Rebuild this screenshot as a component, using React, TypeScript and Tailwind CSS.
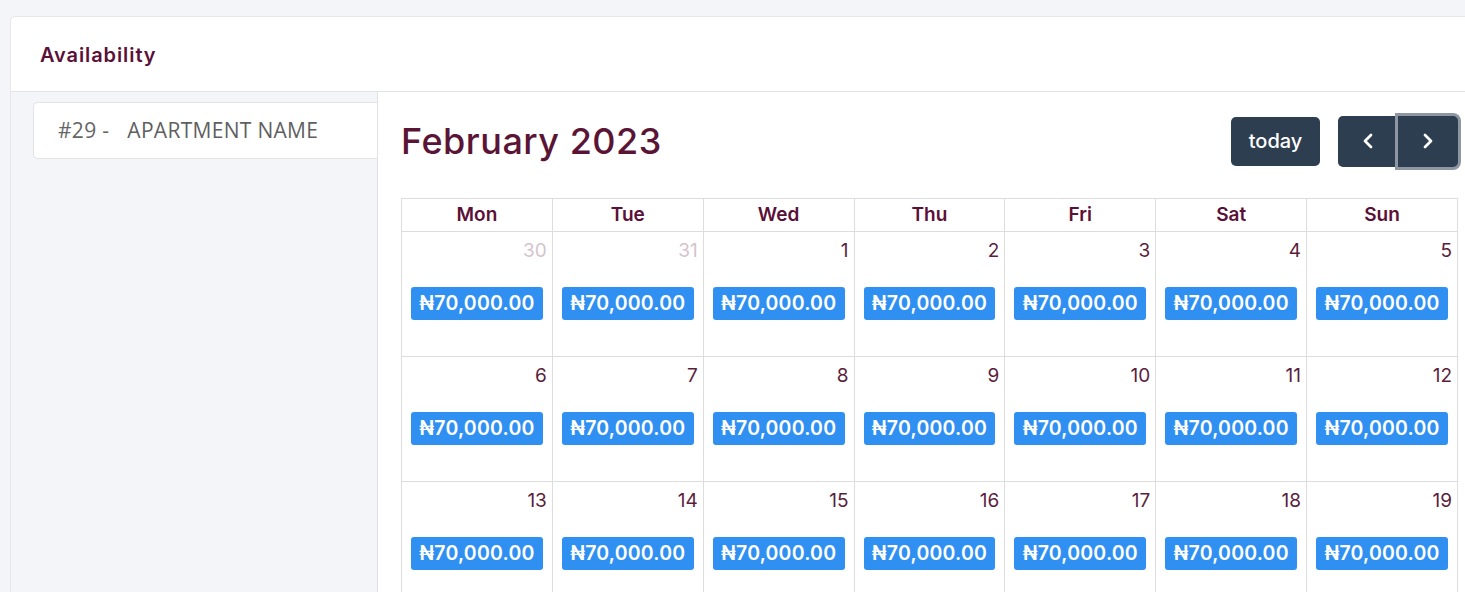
import { ChevronLeft, ChevronRight } from 'lucide-react';

const font = { fontFamily: 'Inter, "Noto Sans", "DejaVu Sans", sans-serif' };

type Day = { n: number; other?: boolean };

const weeks: Day[][] = [
  [{ n: 30, other: true }, { n: 31, other: true }, { n: 1 }, { n: 2 }, { n: 3 }, { n: 4 }, { n: 5 }],
  [{ n: 6 }, { n: 7 }, { n: 8 }, { n: 9 }, { n: 10 }, { n: 11 }, { n: 12 }],
  [{ n: 13 }, { n: 14 }, { n: 15 }, { n: 16 }, { n: 17 }, { n: 18 }, { n: 19 }],
];

const dayNames = ['Mon', 'Tue', 'Wed', 'Thu', 'Fri', 'Sat', 'Sun'];

function DayCell({ day }: { day: Day }) {
  return (
    <td className="border border-[#dddddd] align-top h-[125px] p-0">
      <div className="flex flex-col h-full">
        <div
          className={`text-right pr-[5px] pt-[6px] text-[19px] leading-[26px] ${
            day.other ? 'text-[#d5c4cc]' : 'text-[#5a1e3c]'
          }`}
        >
          {day.n}
        </div>
        <div className="mx-[9px] mt-[23px] h-[33px] rounded-[3px] bg-[#3090f2] text-white font-semibold text-[19.5px] tracking-[0.2px] flex items-center justify-center">
          ₦70,000.00
        </div>
      </div>
    </td>
  );
}

export default function App() {
  return (
    <div className="bg-[#f4f5f8] h-[592px] overflow-hidden pt-[16px] pl-[10px]" style={font}>
      <div className="bg-white border border-r-0 border-[#e6e7eb] rounded-tl-[5px]">
        <div className="h-[75px] flex items-center pl-[29px] border-b border-[#e2e3e6]">
          <h2 className="text-[20px] font-semibold text-[#5a1037] tracking-[0.9px] pt-[2px]">Availability</h2>
        </div>

        <div className="flex">
          <div className="w-[367px] shrink-0 bg-[#f4f5f8] border-r border-[#dfe1e4] pt-[10px] pl-[22px] h-[520px]">
            <div
              className="h-[57px] bg-white border border-r-0 border-[#e1e3e6] rounded-l-[5px] flex items-center pl-[24px] text-[21px] text-[#5f5f5f] tracking-[0.3px]"
              style={{ fontFamily: '"Open Sans", Roboto, sans-serif' }}
            >
              <span className="text-[#666]">#29 -</span>
              <span className="ml-[18px]">APARTMENT NAME</span>
            </div>
          </div>

          <div className="flex-1 pl-[23px] pr-[7px] pt-[23px]">
            <div className="flex items-center justify-between h-[52px]">
              <h1 className="text-[36px] font-medium text-[#5a1536] tracking-[0.5px]">February 2023</h1>
              <div className="flex items-center gap-[18px]">
                <button className="h-[49px] w-[89px] rounded-[5px] bg-[#2c3e50] text-white text-[20px] font-medium">
                  today
                </button>
                <div className="flex">
                  <button className="h-[51px] w-[60px] rounded-l-[5px] bg-[#2c3e50] text-white flex items-center justify-center">
                    <ChevronLeft size={24} strokeWidth={2.75} />
                  </button>
                  <button className="h-[51px] w-[60px] rounded-r-[5px] bg-[#2c3e50] text-white flex items-center justify-center ring-[3px] ring-[#8d96a1]">
                    <ChevronRight size={24} strokeWidth={2.75} />
                  </button>
                </div>
              </div>
            </div>

            <table className="mt-[31px] w-[1057px] border-collapse table-fixed">
              <thead>
                <tr>
                  {dayNames.map((d) => (
                    <th key={d} className="border border-[#dddddd] h-[33px] text-[19px] font-semibold text-[#5a1037]">
                      {d}
                    </th>
                  ))}
                </tr>
              </thead>
              <tbody>
                {weeks.map((w, i) => (
                  <tr key={i}>
                    {w.map((day) => (
                      <DayCell key={day.n} day={day} />
                    ))}
                  </tr>
                ))}
              </tbody>
            </table>
          </div>
        </div>
      </div>
    </div>
  );
}
